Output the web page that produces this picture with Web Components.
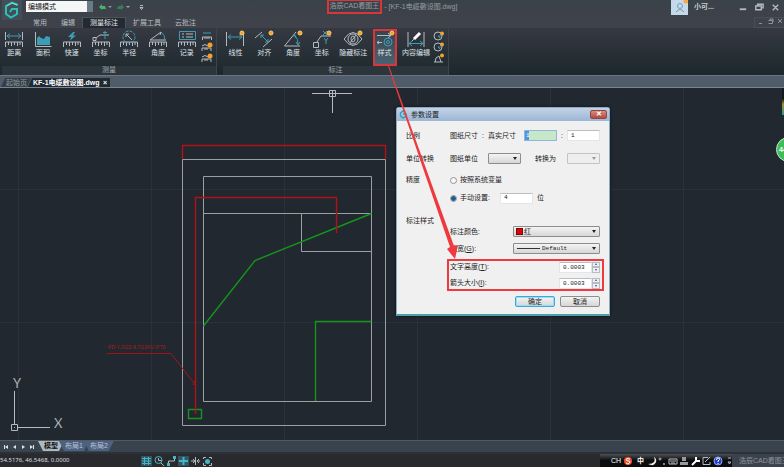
<!DOCTYPE html>
<html lang="zh-CN">
<head>
<meta charset="utf-8">
<title>浩辰CAD看图王</title>
<style>
  body {
    margin: 0;
    font: 7px/10px "Liberation Sans", "Noto Sans CJK SC", sans-serif;
    color: #c9ced3;
    background: #212830;
  }
</style>
</head>
<body>
<cad-app></cad-app>

<script>
const RESET = `
  * { box-sizing: border-box; }
  button, input, select { font: inherit; color: inherit; margin: 0; padding: 0; border: 0; background: none; border-radius: 0; outline: 0; }
  select { appearance: none; }
  svg { display: block; flex: none; fill: none; stroke: #b4bbc0; }
  a { color: inherit; text-decoration: none; }
`;

const RULER = '<path d="M1.5 17v-5h17v5M4.5 12v3M7.5 12v4M10.5 12v3M13.5 12v4M16 12v3"/>';
const ICONS = {
  distance: RULER + '<path d="M1.5 2v8M18.5 2v8"/><path class="t" d="M3 6h14M6 3.5L3 6l3 2.500M14 3.500L17 6l-3 2.500"/>',
  area: '<path d="M2.500 2v14.500h16"/><path class="tf" d="M4 15V8l2-2 2 2 3 1 2-3 4 1v8z"/>',
  quick: RULER + '<path class="tf" d="M11 2L6 7h3L8 10.500 14 5.500h-3l2-3.500z"/>',
  coord: RULER + '<path d="M2 7.500h3v3H2zM5 8l4-3h9"/><path class="t" d="M14 1v8M12 2.500h4"/>',
  radius: RULER + '<circle class="t" cx="10" cy="7" r="6" stroke-dasharray="3 1"/><path d="M13 10L7 4M7 7V4h3"/>',
  angle: RULER + '<path d="M2 10L13 2M2 10h16"/><path class="t" d="M13 2q4 3 4 8"/><path d="M13 2l-1 3"/>',
  record: RULER + '<path class="t" d="M2.500 1.500h16v8h-16z"/><path d="M5 4h2M9 4h7M5 7h2M9 7h7"/>',
  linear: '<path d="M1.500 2v14M18.500 2v14"/><path class="t" d="M3 7h14M6 4.500L3 7l3 2.500M14 4.500L17 7l-3 2.500"/>',
  align: '<path d="M1 8l7-6M9 17l9-8"/><path class="t" d="M7 5l7 7M7 8V5h3M11 12h3V9"/>',
  angle2: '<path d="M17 16H1.500L13 2"/><path class="t" d="M11 5q5 4 4 10M9 7l3-2 1 3M13 12l2 3 2-3"/>',
  coord2: '<path d="M1.500 12.500h5v5h-5zM5 12l4-6h10"/><path class="t" d="M11 1l4 4M15 1l-4 4M12 8l2 2.500L16 8M14 10v4"/>',
  hide: '<path d="M1 9q9-13 18 0q-9 13-18 0z"/><circle cx="10" cy="9" r="5"/><ellipse cx="10" cy="9" rx="2" ry="3"/><path d="M7 13l6-8"/>',
  style: '<path d="M2 5.500h14M13 3l3 2.500L13 8M2 12.500h5M4 11l-2 1.500L4 14"/><circle class="t" cx="13" cy="12" r="4"/><circle class="t" cx="13" cy="12" r="1.500"/>',
  edit: '<path d="M2 2v15M18 2v15"/><path class="t" d="M3 13.500h14M6 11l-3 2.500L6 16M14 11l3 2.500-3 2.500"/><path d="M8 9l6-6" stroke="#fff" stroke-width="3"/><path d="M6 11l2-2"/>'
};

function define(name, html, setup) {
  const template = document.createElement('template');
  template.innerHTML = html;
  customElements.define(name, class extends HTMLElement {
    constructor() {
      super();
      this.attachShadow({ mode: 'open' });
      this.shadowRoot.appendChild(template.content.cloneNode(true));
    }

    connectedCallback() {
      if (setup) setup(this, this.shadowRoot);
    }
  });
}

define('tool-button', `
  <style>
    ${RESET}
    :host { display: flex; flex: 1 1 0; justify-content: center; }
    :host([wide]) { flex: 0 0 34px; }
    button { display: flex; flex-direction: column; align-items: center; width: 24px; height: 37px; padding-top: 1px; white-space: nowrap; color: #dfe3e6; }
    :host([wide]) button { width: 34px; }
    :host([marked]) button { border: 2px solid #d9363b; padding: 0; background: linear-gradient(#39444d, #4a6272); }
    :host([marked]) svg { margin-top: -1px; }
    .t { stroke: #3d9db5; }
    .tf { fill: #3d9db5; stroke: none; }
    .dot { fill: #f5a02c; stroke: #ffcf69; display: none; }
    :host([dot]) .dot { display: block; }
    span { line-height: 10px; }
  </style>
  <button type="button">
    <svg width="20" height="18" viewBox="0 0 20 18"><g class="icon"></g><circle class="dot" cx="17" cy="3" r="2"/></svg>
    <span><slot></slot></span>
  </button>
`, (el, root) => {
  root.querySelector('.icon').innerHTML = ICONS[el.getAttribute('icon')];
});

define('ribbon-panel', `
  <style>
    ${RESET}
    :host { display: flex; flex-direction: column; border-right: 1px solid #3d454b; }
    .tools { display: flex; flex: 1; min-height: 0; padding-top: 1px; }
    .more { display: flex; flex-direction: column; gap: 1px; width: 15px; padding-top: 2px; }
    .title { flex: none; height: 9px; line-height: 8px; margin-left: 2px; text-align: center; background: #2d353c; color: #a4abb0; }
  </style>
  <div class="tools"><slot></slot><div class="more"><slot name="more"></slot></div></div>
  <div class="title"></div>
`, (el, root) => {
  root.querySelector('.title').textContent = el.getAttribute('label');
});

// small drop-down tools at the end of a panel
define('mini-tool', `
  <style>
    ${RESET}
    :host { display: block; }
    button { display: block; }
    .t { stroke: #3d9db5; }
  </style>
  <button type="button"><svg width="12" height="10" viewBox="0 0 12 10"></svg></button>
`, (el, root) => {
  const shapes = {
    ruler: '<path class="t" d="M2 2h8"/><path d="M1.500 9V6h9v3M4 6v2M6 6v2M8 6v2"/>',
    rulerDot: '<path d="M1 9V6h9v3M4 6v2M6 6v2M1 4q3-3 6 0"/><circle cx="9" cy="3" r="2.500" fill="#f5a02c" stroke="none"/>',
    circle: '<circle cx="5" cy="5" r="4"/><path class="t" d="M5 5h4M5 5l3 3"/><circle cx="9" cy="2.500" r="2" fill="#f5a02c" stroke="none"/>',
    arc: '<path d="M2 9q0-5 4-6l2 6M1 9h9"/><circle cx="9" cy="2.500" r="2" fill="#f5a02c" stroke="none"/>'
  };
  root.querySelector('button').setAttribute('aria-label', el.getAttribute('label'));
  root.querySelector('svg').innerHTML = shapes[el.getAttribute('shape')];
});

define('title-bar', `
  <style>
    ${RESET}
    :host { display: grid; grid-template-columns: 24px 1fr auto; background: linear-gradient(#3a4249, #40424b); }
    .logo { grid-row: span 2; padding-left: 2px; }
    .top { display: grid; grid-template-columns: 1fr auto 1fr; grid-column: 2 / 4; height: 17px; margin-left: -24px; }
    .quick { display: flex; align-items: center; gap: 6px; padding: 0 0 4px 26px; }
    .mode { display: flex; width: 67px; height: 11px; background: #f5f6f6; color: #111; }
    .mode select { width: 100%; padding-left: 2px; line-height: 11px; border-right: 6px solid #697c86; }
    h1 { margin: 0; font: inherit; display: flex; color: #969da2; white-space: pre; }
    h1 span { height: 14px; padding: 0 1px; line-height: 10px; border: 2px solid #d9363b; border-top-width: 1px; }
    h1 em { font-style: normal; line-height: 13px; }
    .user { display: flex; justify-content: flex-end; align-items: flex-start; gap: 6px; padding-right: 3px; }
    .user b { width: 37px; line-height: 14px; }
    .win { padding-top: 1px; }
    nav { display: flex; height: 11px; padding-left: 2px; }
    nav a { padding: 0 7px; line-height: 11px; color: #b7bdc1; }
    nav a.active { background: #242a33; color: #e4e7ea; border: 1px solid #4b545b; border-bottom: 0; line-height: 9px; }
    .doc { padding: 0 2px 0 3px; border: 1px solid #4a4e56; border-right: 0; }
    .doc svg { stroke: #8c9298; }
  </style>
  <div class="logo">
    <svg width="20" height="20" viewBox="0 0 20 20"><path fill="#454d58" stroke="none" d="M0 0h20v20H0z"/><path d="M16 5L10 2.500 4 6v8l5 3.500 6-3.500V9h-5l-2 3" stroke="#29c2b7" stroke-width="2"/><path d="M5 6l5-3 5 2" stroke="#77e4d2"/></svg>
  </div>
  <div class="top">
    <div class="quick">
      <span class="mode"><select aria-label="模式"><option>编辑模式</option></select></span>
      <svg width="52" height="8" viewBox="0 0 52 8"><path fill="#45b36c" stroke="none" d="M0 4l3-3v2h3l1 3H3v1z"/><path fill="#8d9498" stroke="none" d="M9 3h4l-2 2z"/><path fill="#397c5c" stroke="none" d="M25 4l-3-3v2h-3l-1 3h4v1z"/><path fill="#9fa6a9" stroke="none" d="M27 3h4l-2 2z"/><path d="M41 2.500h3M41 4.500h3l-1.500 2z"/></svg>
    </div>
    <h1><span>浩辰CAD看图王</span><em> - [KF-1电缆敷设图.dwg]</em></h1>
    <div class="user">
      <svg width="17" height="15" viewBox="0 0 17 15"><path fill="#c4d9ea" stroke="none" d="M0 0h17v15H0z"/><circle cx="9" cy="6" r="2.500" stroke="#7c9bb6"/><path d="M5 12q4-5 8 0" stroke="#7c9bb6"/><circle cx="15" cy="1" r="2.500" fill="#f5a843" stroke="none"/></svg>
      <b>小可...</b>
      <svg class="win" width="44" height="12" viewBox="0 0 44 12"><path d="M1 9h7" stroke-width="2"/><path d="M18.500 5.500h6v4h-6zM20.500 5V3.500h6v4H25M37 4l6 6M43 4l-6 6" stroke-width="1.500"/></svg>
    </div>
  </div>
  <nav>
    <a href="#">常用</a><a href="#">编辑</a><a href="#" class="active">测量标注</a><a href="#">扩展工具</a><a href="#">云批注</a>
  </nav>
  <div class="doc">
    <svg width="24" height="7" viewBox="0 0 24 7"><path d="M1 5.500h3M10.500 2.500h4v3h-4M12 2V1h3v3M20 1l4 4M24 1l-4 4"/></svg>
  </div>
`);

define('doc-tabs', `
  <style>
    ${RESET}
    :host { display: flex; align-items: flex-end; height: 13px; padding-left: 1px; background: #505c69; border-top: 1px solid #6a7783; border-bottom: 1px solid #788590; }
    a { display: flex; justify-content: space-between; height: 9px; line-height: 9px; padding: 0 4px 0 5px; background: #343e47; color: #939ba0; clip-path: polygon(4px 0, 100% 0, calc(100% - 4px) 100%, 0 100%); white-space: nowrap; }
    a.active { min-width: 82px; padding-right: 3px; margin-left: -3px; background: #1f2a33; color: #fff; font-weight: bold; clip-path: polygon(4px 0, 100% 0, 100% 100%, 0 100%); }
  </style>
  <a href="#">起始页</a><a href="#" class="active"><span>KF-1电缆敷设图.dwg</span><span>×</span></a>
`);

define('params-dialog', `
  <style>
    ${RESET}
    :host { display: block; width: 214px; background: #f0f0f0; color: #222; border: 1px solid #8ea9c0; border-bottom: 2px solid #4aa0aa; border-radius: 3px 3px 0 0; box-shadow: 0 0 3px #0d151a; }
    header { display: flex; align-items: center; gap: 4px; height: 13px; padding: 0 2px; background: linear-gradient(#c2d2e6, #9bb6d6); }
    header svg { stroke: #29a6b8; }
    header button { width: 17px; height: 9px; margin-left: auto; margin-bottom: 1px; border: 1px solid #8a4b48; border-radius: 2px; background: linear-gradient(#d98c7e, #b8483c); color: #fff; line-height: 6px; font-weight: bold; }
    form { padding: 3px 9px 7px; }
    section { display: grid; grid-template-columns: 44px 1fr; align-items: start; }
    .row { display: flex; align-items: center; height: 17px; white-space: nowrap; }
    .tall .row, .tall .name { height: 23px; line-height: 23px; }
    .precise .row, .precise .name { height: 18px; line-height: 18px; }
    .precise { margin-top: 1px; }
    .styles { margin-top: 9px; }
    .styles .fields { padding-top: 7px; }
    .name { line-height: 10px; }
    .sep { padding: 0 4px; }
    .push { margin-left: auto; }
    input:not([type=radio]) { width: 33px; height: 11px; padding: 0 3px; background: #fff; border: 1px solid #e3e5e8; border-top-color: #b9bec5; font-family: "Liberation Mono", monospace; font-size: 6px; }
    input.focus { padding-left: 1px; background: linear-gradient(90deg, #4f94e0 0 4px, #c7e8c8 4px); border-color: #8fb7dc; color: #fff; }
    input[type=radio] { appearance: none; width: 7px; height: 7px; margin-right: 3px; border: 1px solid #8e9499; border-radius: 50%; background: #f8f8f8; }
    input[type=radio]:checked { background: radial-gradient(#1b5d8c 0 2px, #cde 3px); }
    .combo { display: flex; align-items: center; width: 33px; height: 11px; padding: 0 3px 0 2px; background: linear-gradient(#f4f4f4, #d6d6d6); border: 1px solid #8d8d8d; border-radius: 1px; }
    .combo select { flex: 1; min-width: 0; height: 9px; line-height: 9px; }
    .combo::after { content: ""; border: 2px solid transparent; border-top: 3px solid #222; border-bottom: 0; }
    .combo.off { border-color: #c3c3c3; background: #eee; }
    .combo.off::after { border-top-color: #999; }
    .combo.big { width: 87px; }
    .swatch { width: 7px; height: 7px; margin-right: 1px; background: #e80000; border: 1px solid #611; }
    .line { width: 23px; height: 1px; margin: 0 2px 0 1px; background: #333; }
    .mono { font-family: "Liberation Mono", monospace; font-size: 6px; }
    .marked { height: 32px; margin: 2px -4px 0 -3px; padding: 0 4px 0 3px; outline: 2px solid #ee3a3e; outline-offset: -2px; }
    .marked .row { height: 16px; }
    .spin { display: flex; height: 11px; }
    .spin div { display: flex; flex-direction: column; width: 8px; }
    .spin button { flex: 1; display: grid; place-items: center; border: 1px solid #b8bdc4; background: #edf1f6; }
    .spin button::after { content: ""; border: 1px solid transparent; border-bottom: 2px solid #456; border-top: 0; }
    .spin button + button::after { transform: scaleY(-1); }
    .actions { display: flex; justify-content: flex-end; gap: 5px; padding-top: 5px; }
    .actions button { width: 40px; height: 11px; line-height: 8px; border: 1px solid #8d8d8d; border-radius: 2px; background: linear-gradient(#f4f4f4, #d6d6d6); }
    .actions .primary { border-color: #35abd8; box-shadow: inset 0 0 0 1px #9fdcf3; }
  </style>
  <header>
    <svg width="8" height="9" viewBox="0 0 8 9"><path d="M6 2L4 1 1.500 3v3L4 8l3-2V4H4" stroke-width="1.500"/></svg>
    <span>参数设置</span>
    <button type="button" aria-label="关闭">✕</button>
  </header>
  <form>
    <section class="tall">
      <span class="name">比例</span>
      <div class="row"><label for="paper">图纸尺寸</label><span class="sep">:</span><label for="real">真实尺寸</label><input id="paper" class="focus push" value="1"><span class="sep">:</span><input id="real" value="1"></div>
      <span class="name">单位转换</span>
      <div class="row"><label for="unit" style="padding-right:10px">图纸单位</label><span class="combo"><select id="unit"><option></option></select></span><label for="to" class="push" style="padding-right:11px">转换为</label><span class="combo off"><select id="to" disabled><option></option></select></span></div>
    </section>
    <section class="precise">
      <span class="name">精度</span>
      <div>
        <div class="row"><input type="radio" name="p" id="sys"><label for="sys">按照系统变量</label></div>
        <div class="row"><input type="radio" name="p" id="man" checked><label for="man" style="padding-right:10px">手动设置:</label><input id="digits" aria-label="精度位数" value="4"><label for="digits" style="padding-left:4px">位</label></div>
      </div>
    </section>
    <section class="styles">
      <span class="name">标注样式</span>
      <div class="fields">
        <div class="row"><label for="color">标注颜色:</label><span class="combo big push"><i class="swatch"></i><select id="color"><option>红</option></select></span></div>
        <div class="row"><label for="weight">线宽(<u>G</u>):</label><span class="combo big push"><i class="line"></i><select id="weight" class="mono"><option>Default</option></select></span></div>
        <div class="marked">
          <div class="row"><label for="text">文字高度(<u>T</u>):</label><span class="spin push"><input id="text" value="0.0003"><div><button type="button" aria-label="增大"></button><button type="button" aria-label="减小"></button></div></span></div>
          <div class="row"><label for="arrow">箭头大小(<u>I</u>):</label><span class="spin push"><input id="arrow" value="0.0003"><div><button type="button" aria-label="增大"></button><button type="button" aria-label="减小"></button></div></span></div>
        </div>
      </div>
    </section>
    <div class="actions"><button type="button" class="primary">确定</button><button type="button">取消</button></div>
  </form>
`);

define('drawing-area', `
  <style>
    ${RESET}
    :host { display: block; position: relative; flex: 1; min-height: 0; overflow: hidden; background: #212830; }
    .sheet { width: 100%; height: 100%; }
    text { stroke: none; }
    .grid { stroke: #2a3239; }
    .wall { stroke: #9a9fa3; }
    .green { stroke: #14961b; stroke-width: 1.4; }
    .red { stroke: #b01217; stroke-width: 1.4; }
    .leader { stroke: #a01418; }
    params-dialog { position: absolute; left: 396px; top: 19px; }
    .bubble { position: absolute; right: -17px; top: 49px; width: 25px; height: 25px; padding-left: 2px; border: 1px solid #c3e8c9; border-radius: 50%; background: #3fbd58; color: #fff; font-weight: bold; text-align: left; }
    .dock { position: absolute; right: 0; top: 0; width: 2px; height: 27px; background: linear-gradient(#15191d 40%, #a48f38 60%, #2a9c8a); }
  </style>
  <svg class="sheet" viewBox="0 88 784 352" preserveAspectRatio="xMinYMin meet">
    <path class="grid" d="M18.500 88v352M151.500 88v352M284.500 88v352M417.500 88v352M550.500 88v352M683.500 88v352M0 189.500h784M0 322.500h784"/>
    <path class="wall" d="M182.500 159.500h203v266h-203zM203.500 176.500h168v225h-168zM203.500 213.500h168M301.500 213.500v38h70"/>
    <path class="green" d="M371.500 213.500L255 260.500 203.500 326M315.500 401v-79.500h56M188.500 409.500h13v9h-13z"/>
    <path class="red" d="M182.500 159v-13.500h203V159M195.500 414V197.500h141V233"/>
    <path class="leader" d="M107 353.500h64l24.500 31.500-3-1M195.500 385l-1-4"/>
    <text x="108" y="349" fill="#b3191d" font-size="5">PD-YJV22-8.7/10KV-3*70</text>
    <path d="M312 93.500h40M332.500 91v22M329.500 90.500h6v6h-6z"/>
    <path d="M14.500 391v34M17 427.500h33M11.500 424.500h6v6h-6zM14.500 427v1"/>
    <text x="13" y="388" fill="#a9afb3" font-family="Lato, sans-serif" font-size="13">Y</text>
    <text x="54" y="428" fill="#a9afb3" font-family="Lato, sans-serif" font-size="13">X</text>
  </svg>
  <params-dialog></params-dialog>
  <i class="dock"></i>
  <button type="button" class="bubble">44</button>
`);

define('layout-tabs', `
  <style>
    ${RESET}
    :host { display: flex; height: 14px; padding-left: 2px; background: #39434d; border-top: 1px solid #4f5a64; border-bottom: 2px solid #2c3138; }
    .nav { fill: #dfe3e6; stroke: none; margin-right: 1px; }
    a { height: 10px; line-height: 10px; padding: 0 6px; margin-right: -5px; background: #4d6180; color: #bac6d8; clip-path: polygon(0 0, 100% 0, calc(100% - 5px) 100%, 5px 100%); }
    a.active { background: #aeb8c0; color: #111; font-weight: bold; }
  </style>
  <svg class="nav" width="35" height="12" viewBox="0 0 35 12"><path d="M2 4h1v4H2zM6 4v4L3 6zM14 4v4l-3-2zM20 4v4l3-2zM28 4v4l3-2zM31 4h1v4h-1z"/></svg>
  <a href="#" class="active">模型</a><a href="#">布局1</a><a href="#">布局2</a>
`);

define('status-bar', `
  <style>
    ${RESET}
    :host { display: grid; grid-template-columns: 139px 1fr 132px 52px; align-items: center; height: 13px; background: #282a2e; overflow: hidden; white-space: nowrap; }
    .pos { font: 6px/13px "Noto Sans", "Liberation Sans", sans-serif; color: #dcdfe1; }
    .t { stroke: #45b5c4; }
    .tray { display: flex; align-items: center; height: 13px; padding-left: 11px; background: linear-gradient(#4d5257, #0b0c0d 50%); color: #fff; }
    .tray span { width: 13px; }
    .tray b { width: 10px; }
    .app { height: 13px; line-height: 13px; padding-left: 7px; background: #3b424e; color: #8f969d; overflow: hidden; }
  </style>
  <span class="pos">54.5176, 46.5468, 0.0000</span>
  <svg width="76" height="12" viewBox="0 0 76 12">
    <path fill="#315565" stroke="none" d="M2 1h11v10H2zM39 1h11v10H39z"/>
    <path class="t" d="M3 3.500h9M3 6h9M3 8.500h9M5.500 2v8M9.500 2v8"/>
    <circle class="t" cx="19.500" cy="5" r="3.500"/><path d="M19.500 3v2.500h3M22 8l3 3"/>
    <path d="M29.500 9V6h6V3"/><path fill="#45b5c4" stroke="none" d="M28 8h3v3h-3zM34 1h3v3h-3z"/>
    <path class="t" d="M44.500 2v8M40 6h9" stroke-width="2"/>
    <path d="M56.500 2v8M52 6h3M58 6h3M54 4l2 2-2 2M60 4l-2 2 2 2"/>
    <path d="M64.500 4V2.500H67M70 2.500h2.500V4M72.500 8v2.500H70M67 10.500h-2.500V8"/><circle cx="68.500" cy="6.500" r="2.500" fill="#45b5c4" stroke="none"/>
  </svg>
  <div class="tray">
    <span>CH</span>
    <svg width="13" height="12" viewBox="0 0 13 12"><circle cx="4" cy="6" r="4" fill="#ef512c" stroke="none"/><path d="M6 4q-4-1-4 .5t2.500 1.500 1 2-3.500 0" stroke="#fff"/></svg>
    <b>中</b>
    <svg width="84" height="12" viewBox="0 0 84 12"><path fill="#eee" stroke="none" d="M7 2q3 7-6 7 6 3 8-2 1-3-2-5z"/><circle cx="13" cy="4" r="1"/><path d="M17 8v2" stroke="#fff"/><path d="M22 4h8v5h-8zM23 6h6M24 8h4"/><path fill="#999" stroke="none" d="M35 2h4v4h-4zM33 7h8v3h-8z"/><path d="M45 10l5-5M49 2v4h4" stroke="#fff" stroke-width="2"/><path d="M61 2.500h-5v7h7V7M58 7l5-5"/><circle cx="71" cy="6" r="4" fill="#1d3fc4" stroke="#8fa6ee"/><path d="M69.500 5q0-2 1.500-2 2 0 1.500 1.500L71 6v1M71 8v1" stroke="#fff"/><path d="M81 3h3M81 7h3l-1.500 2z"/></svg>
  </div>
  <div class="app">浩辰CAD看图王</div>
`);

define('cad-app', `
  <style>
    ${RESET}
    :host { display: flex; flex-direction: column; position: relative; height: 100vh; overflow: hidden; }
    .ribbon { display: flex; gap: 4px; height: 47px; background: linear-gradient(#363942, #1b282c); }
    .ribbon ribbon-panel:first-child { width: 217px; }
    .ribbon ribbon-panel:last-child { width: 228px; }
    .pointer { position: absolute; left: 386px; top: 64px; pointer-events: none; fill: #ee3a3e; stroke: none; }
  </style>
  <title-bar></title-bar>
  <div class="ribbon">
    <ribbon-panel label="测量">
      <tool-button icon="distance">距离</tool-button>
      <tool-button icon="area">面积</tool-button>
      <tool-button icon="quick">快速</tool-button>
      <tool-button icon="coord">坐标</tool-button>
      <tool-button icon="radius">半径</tool-button>
      <tool-button icon="angle">角度</tool-button>
      <tool-button icon="record">记录</tool-button>
      <mini-tool slot="more" shape="ruler" label="连续测量"></mini-tool>
      <mini-tool slot="more" shape="rulerDot" label="弧长"></mini-tool>
      <mini-tool slot="more" shape="rulerDot" label="体积"></mini-tool>
    </ribbon-panel>
    <ribbon-panel label="标注">
      <tool-button icon="linear" dot>线性</tool-button>
      <tool-button icon="align" dot>对齐</tool-button>
      <tool-button icon="angle2" dot>角度</tool-button>
      <tool-button icon="coord2" dot>坐标</tool-button>
      <tool-button icon="hide" dot wide>隐藏标注</tool-button>
      <tool-button icon="style" dot marked>样式</tool-button>
      <tool-button icon="edit" wide>内容编辑</tool-button>
      <mini-tool slot="more" shape="circle" label="半径标注"></mini-tool>
      <mini-tool slot="more" shape="circle" label="直径标注"></mini-tool>
      <mini-tool slot="more" shape="arc" label="弧长标注"></mini-tool>
    </ribbon-panel>
  </div>
  <doc-tabs></doc-tabs>
  <drawing-area></drawing-area>
  <layout-tabs></layout-tabs>
  <status-bar></status-bar>
  <svg class="pointer" width="74" height="198" viewBox="0 0 74 198"><path d="M3 2L68 182l4-1-3 14-8-10 3-2L2 2z"/></svg>
`);
</script>
</body>
</html>
